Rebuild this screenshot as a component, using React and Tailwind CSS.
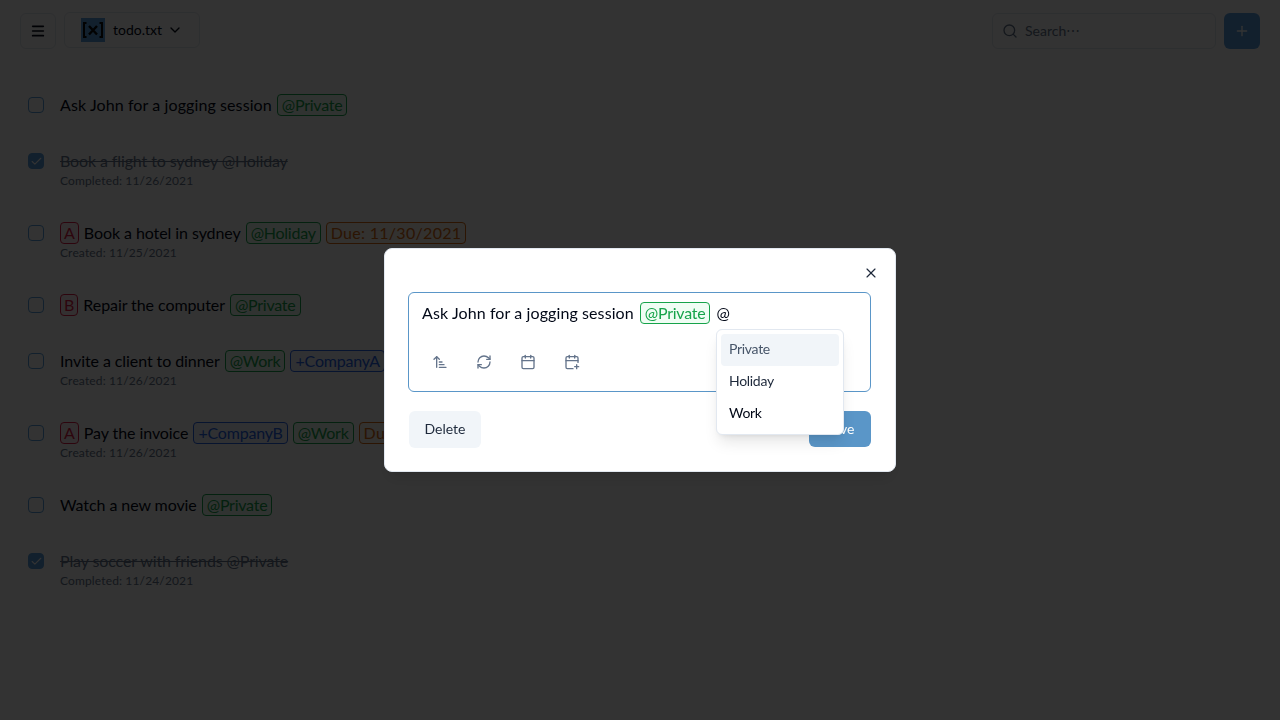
import React from "react";
import { Menu, ChevronDown, Search, Plus, X, RefreshCw, Calendar, CalendarPlus, ArrowUpNarrowWide, Check } from "lucide-react";

const Chip = ({ c, children }) => {
  const cls = {
    green: "border-[#16a34a] text-[#16a34a] bg-[#f0fdf4] tracking-[-0.25px] px-1",
    blue: "border-[#2563eb] text-[#2563eb] bg-[#eff6ff] tracking-[-0.2px] px-1",
    orange: "border-[#d9690f] text-[#d9690f] bg-[#fff7ed] tracking-[0.3px] px-1",
    red: "border-[#e11d48] text-[#e11d48] bg-[#fff1f2] px-[3px]",
  }[c];
  return <span className={`inline-block border rounded-[4px] h-[22px] leading-[20px] ${cls}`}>{children}</span>;
};

const rows = [
  { parts: [["w", "Ask John for a jogging session"], ["green", "@Private"]] },
  { done: "Book a flight to sydney @Holiday", sub: "Completed: 11/26/2021" },
  { parts: [["red", "A"], ["t", "Book a hotel in sydney"], ["green", "@Holiday"], ["orange", "Due: 11/30/2021"]], sub: "Created: 11/25/2021" },
  { parts: [["red", "B"], ["t", "Repair the computer"], ["green", "@Private"]] },
  { parts: [["t", "Invite a client to dinner"], ["green", "@Work"], ["blue", "+CompanyA"]], sub: "Created: 11/26/2021" },
  { parts: [["red", "A"], ["t", "Pay the invoice"], ["blue", "+CompanyB"], ["green", "@Work"], ["orange", "Due: 11/30/2021"]], sub: "Created: 11/26/2021" },
  { parts: [["t", "Watch a new movie"], ["green", "@Private"]] },
  { done: "Play soccer with friends @Private", sub: "Completed: 11/24/2021" },
];

const Box = ({ checked }) => (
  <span className={`w-4 h-4 rounded-[4px] border border-[#5aa0e0] flex items-center justify-center shrink-0 ${checked ? "bg-[#5aa0e0]" : ""}`}>
    {checked && <Check size={13} strokeWidth={2} className="text-white" />}
  </span>
);

function Row({ r }) {
  return (
    <div className="flex items-start gap-4 pl-7">
      <div className="h-6 flex items-center"><Box checked={!!r.done} /></div>
      <div className="min-w-0">
        <div className="h-6 leading-6 flex items-center gap-[5px] whitespace-nowrap">
          {r.done ? (
            <span className="line-through text-[#64748b] tracking-[-0.12px]">{r.done}</span>
          ) : (
            r.parts.map(([k, v], i) =>
              k === "t" ? <span key={i} className="tracking-[-0.08px]">{v}</span>
              : k === "w" ? <span key={i} className="tracking-[0.1px]">{v}</span>
              : <Chip key={i} c={k}>{v}</Chip>)
          )}
        </div>
        {r.sub && <div className="text-xs leading-4 text-[#64748b] tracking-[0.14px]">{r.sub}</div>}
      </div>
    </div>
  );
}

const Logo = () => (
  <svg width="24" height="24" viewBox="0 0 24 24">
    <rect width="24" height="24" fill="#5aa0e0" />
    <path d="M5.5 5H3V19H5.5M18.5 5H21V19H18.5" fill="none" stroke="#0a0a0a" strokeWidth="2" />
    <path d="M8 8L16 16.5M16 8L8 16.5" fill="none" stroke="#0a0a0a" strokeWidth="2.4" />
  </svg>
);

export default function App() {
  return (
    <div className="h-[720px] overflow-hidden bg-white text-[#020817] font-['Lato',sans-serif] text-base relative">
      <header className="flex items-start pt-3 pl-5 pr-5 h-[93px]">
        <button className="w-9 h-9 mt-px rounded-md border border-[#e2e8f0] flex items-center justify-center"><Menu size={16} strokeWidth={2.5} /></button>
        <button className="ml-2 w-[136px] h-9 rounded-md border border-[#e2e8f0] flex items-center pl-4 text-sm">
          <Logo />
          <span className="ml-2 w-[46px] text-left whitespace-nowrap -mt-px">todo.txt</span>
          <ChevronDown size={16} className="ml-2" />
        </button>
        <div className="ml-auto w-[224px] h-9 mt-px rounded-md border border-[#e2e8f0] flex items-center pl-[9px] text-sm text-[#64748b]">
          <Search size={16} />
          <span className="ml-[7px] -mt-px">Search⋯</span>
        </div>
        <button className="ml-2 w-9 h-9 mt-px rounded-md bg-[#5aa0e0] flex items-center justify-center text-white"><Plus size={16} /></button>
      </header>
      <main className="flex flex-col gap-8">
        {rows.map((r, i) => <Row key={i} r={r} />)}
      </main>

      <div className="fixed inset-0 bg-black/80" />

      <div className="fixed left-[384px] top-[248px] w-[512px] h-[224px] bg-white rounded-lg border border-[#e2e8f0] pl-[23px] pr-[24px] pt-[43px] shadow-lg">
        <X size={16} strokeWidth={1.75} className="absolute right-[16px] top-4 text-[#1e293b]" />
        <div className="relative h-[100px] rounded-md border border-[#5a96c8] px-[13px] pt-[9px]">
          <div className="h-[22px] leading-[22px] flex items-center gap-[6px] whitespace-nowrap">
            <span className="tracking-[0.1px]">Ask John for a jogging session</span>
            <Chip c="green">@Private</Chip>
            <span>@</span>
          </div>
          <div className="flex mt-[26px] -ml-1 text-[#64748b]">
            {[ArrowUpNarrowWide, RefreshCw, Calendar, CalendarPlus].map((I, i) => (
              <span key={i} className="w-11 h-6 flex items-center justify-center"><I size={16} strokeWidth={2} /></span>
            ))}
          </div>
          <div className="absolute left-[307px] top-[36px] w-[128px] h-[106px] bg-white rounded-md border border-[#e2e8f0] shadow-lg p-1 text-sm tracking-[-0.3px] z-10">
            <div className="h-8 leading-[30px] px-2 rounded-sm bg-[#f1f5f9] text-[#475569]">Private</div>
            <div className="h-8 leading-[30px] px-2 text-[#1e293b]">Holiday</div>
            <div className="h-8 leading-[30px] px-2">Work</div>
          </div>
        </div>
        <div className="flex justify-between mt-[19px]">
          <button className="ml-px w-[72px] h-[37px] pb-0.5 rounded-md bg-[#f1f5f9] text-sm text-[#1e293b]">Delete</button>
          <button className="w-[62px] h-9 pb-px rounded-md bg-[#5a96c8] text-white text-sm">Save</button>
        </div>
      </div>
    </div>
  );
}
